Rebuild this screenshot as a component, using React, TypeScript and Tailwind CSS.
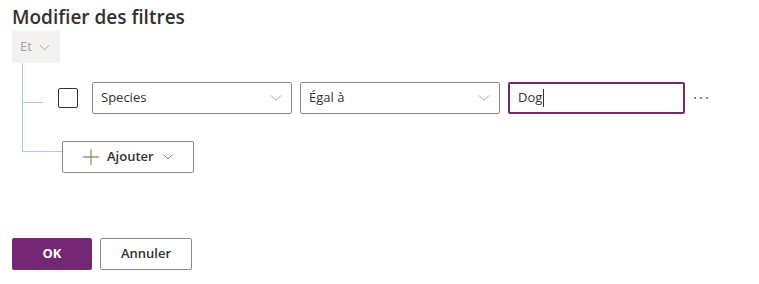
import React from 'react';

const font = { fontFamily: '"Open Sans", "Noto Sans", sans-serif' };

const Chevron: React.FC<{ className?: string; size?: number }> = ({ className, size = 12 }) => (
  <svg width={size} height={size} viewBox="0 0 12 12" className={className} fill="none">
    <path d="M1 3.5 L6 8.5 L11 3.5" stroke="currentColor" strokeWidth="1" />
  </svg>
);

const Dropdown: React.FC<{ value: string; width: string }> = ({ value, width }) => (
  <div className={`${width} h-8 border border-[#8a8886] rounded-[2px] flex items-center justify-between pl-2 pr-[9px] bg-white`}>
    <span className="text-[13px] text-[#323130]">{value}</span>
    <Chevron className="text-[#a19f9d]" size={12} />
  </div>
);

const App: React.FC = () => {
  return (
    <div className="w-[759px] h-[284px] bg-white px-3 pt-[3px]" style={font}>
      <h2 className="text-[19px] leading-7 font-semibold text-[#323130]">Modifier des filtres</h2>

      <div className="w-12 h-8 rounded-[2px] bg-[#f3f2f1] flex items-center gap-[7px] pl-2 text-[13px] text-[#a19f9d]">
        <span>Et</span>
        <Chevron size={11} />
      </div>

      {/* filter rows with tree connectors */}
      <div className="pl-[10px]">
        <div className="flex items-end h-[51px]">
          <div className="w-[21px] h-full border-l border-[#a6c8ff]">
            <div className="mt-[39px] w-5 h-px bg-[#a6c8ff]" />
          </div>
          <div className="flex items-center h-8">
            <div className="w-5 h-5 ml-[15px] border border-[#323130] rounded-[2px]" />
            <div className="ml-[14px] flex items-center gap-2">
              <Dropdown value="Species" width="w-[200px]" />
              <Dropdown value="Égal à" width="w-[200px]" />
              <div className="w-[177px] h-8 border-2 border-[#742774] rounded-[2px] flex items-center pl-2 text-[13px] text-[#323130]">
                Dog<span className="w-px h-[18px] bg-[#323130] ml-px" />
              </div>
              <div className="flex gap-1 ml-[1px]">
                <span className="w-[2px] h-[2px] bg-[#a86aa8]" />
                <span className="w-[2px] h-[2px] bg-[#a86aa8]" />
                <span className="w-[2px] h-[2px] bg-[#a86aa8]" />
              </div>
            </div>
          </div>
        </div>
        <div className="flex items-start">
          <div className="w-10 h-[38px] border-l border-b border-[#a6c8ff]" />
          <div className="mt-[27px] w-[132px] h-8 border border-[#8a8886] rounded-[2px] flex items-center pl-5 gap-2 bg-white">
            <svg width="16" height="16" viewBox="0 0 16 16">
              <path d="M0 8 H16" stroke="#605e5c" strokeWidth="1" />
              <path d="M8 0 V16" stroke="#8a6d3b" strokeWidth="1" />
            </svg>
            <span className="text-[13px] font-semibold text-[#323130]">Ajouter</span>
            <Chevron size={10} className="text-[#605e5c] ml-[1px]" />
          </div>
        </div>
      </div>

      <div className="flex gap-2 mt-[65px]">
        <button className="w-20 h-8 rounded-[2px] bg-[#742774] text-white text-[13px] font-bold">OK</button>
        <button className="w-[92px] h-8 rounded-[2px] border border-[#8a8886] bg-white text-[13px] font-semibold text-[#323130]">Annuler</button>
      </div>
    </div>
  );
};

export default App;
